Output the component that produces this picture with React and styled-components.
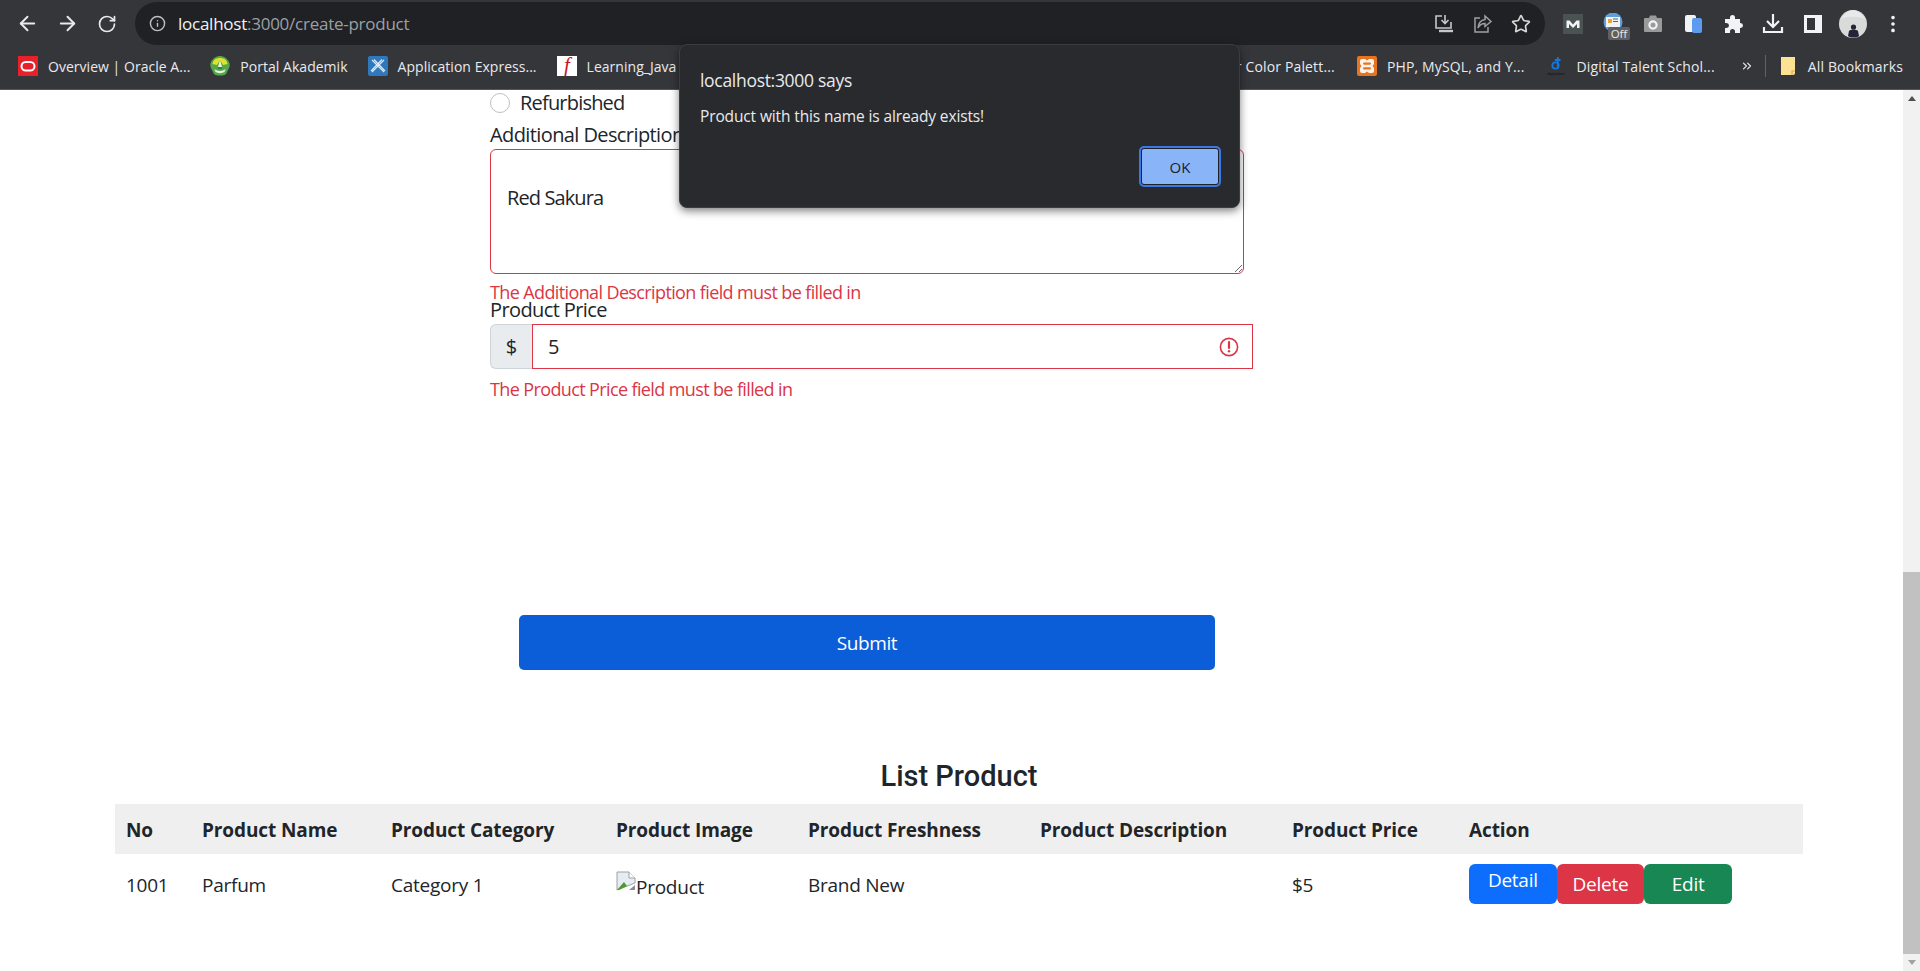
import React from 'react'
import styled, { createGlobalStyle } from 'styled-components'
import { ArrowLeft, ArrowRight, RotateCw, Info, Star, MoreVertical, ChevronsRight } from 'lucide-react'

const Global = createGlobalStyle`
    html, body { margin: 0; padding: 0; height: 100%; overflow: hidden; }
    body { font-family: "Open Sans", "Liberation Sans", sans-serif; color: #212529; background: #fff; }
    * { box-sizing: border-box; }
`

const columns = [76, 189, 225, 192, 232, 252, 177, 345]
const headers = ['No', 'Product Name', 'Product Category', 'Product Image', 'Product Freshness', 'Product Description', 'Product Price', 'Action']

function OracleIcon() {
    return (
        <svg width="20" height="20" viewBox="0 0 20 20">
            <rect width="20" height="20" fill="#e8202a" />
            <rect x="3.5" y="6" width="13" height="8.5" rx="4.2" fill="none" stroke="#fff" strokeWidth="2" />
        </svg>
    )
}

function PortalIcon() {
    return (
        <svg width="20" height="20" viewBox="0 0 20 20">
            <path d="M10 0 C13 0 17 2 19 6 C20 8 20 10 19 12 L16 18 C14 20 6 20 4 18 L1 12 C0 10 0 8 1 6 C3 2 7 0 10 0Z" fill="#55a84a" />
            <path d="M2.5 8 C3 4 6 2 10 2 C14 2 17 4 17.5 8 L13 9 L10 4 L7 9Z" fill="#dfe32a" />
            <path d="M10 3.5 L12 11 H8Z" fill="#eef2d8" />
            <path d="M4.5 13 C7 15.5 13 15.5 15.5 13 L14.5 16 C12 17.5 8 17.5 5.5 16Z" fill="#e9f3e4" />
            <path d="M8 11 H12 V13 H8Z" fill="#2f7f3f" />
        </svg>
    )
}

function ApexIcon() {
    return (
        <svg width="20" height="20" viewBox="0 0 20 20">
            <rect width="20" height="20" rx="2" fill="#2f78bd" />
            <path d="M4 4 L16 16 M16 4 L4 16 M6 3.5 L17 15 M14 3.5 L3 15" stroke="#dcebf7" strokeWidth="1.1" fill="none" />
        </svg>
    )
}

function FlashIcon() {
    return (
        <svg width="20" height="20" viewBox="0 0 20 20">
            <rect width="20" height="20" fill="#fff" />
            <text x="10" y="16" textAnchor="middle" fontFamily="Liberation Serif" fontStyle="italic" fontSize="21" fill="#c8161d">f</text>
        </svg>
    )
}

function XamppIcon() {
    return (
        <svg width="20" height="20" viewBox="0 0 20 20">
            <rect width="20" height="20" rx="2" fill="#e8741f" />
            <path d="M5 3 H8 L10 4.5 L12 3 H15 A2 2 0 0 1 17 5 V8 L15.5 10 L17 12 V15 A2 2 0 0 1 15 17 H12 L10 15.5 L8 17 H5 A2 2 0 0 1 3 15 V12 L4.5 10 L3 8 V5 A2 2 0 0 1 5 3Z" fill="#fdf3ea" />
            <rect x="6" y="6.5" width="8" height="2.2" rx="1.1" fill="#e8741f" />
            <rect x="6" y="11.3" width="8" height="2.2" rx="1.1" fill="#e8741f" />
        </svg>
    )
}

function DigitalIcon() {
    return (
        <svg width="20" height="20" viewBox="0 0 20 20">
            <circle cx="9.5" cy="9.5" r="3.2" fill="none" stroke="#1277e1" strokeWidth="1.8" />
            <path d="M11.8 1 V12.5 M8.8 4 H14.5" stroke="#1277e1" strokeWidth="1.8" fill="none" />
            <text x="10" y="18.5" textAnchor="middle" fontFamily="Liberation Sans" fontSize="4.4" fill="#111">digitalent</text>
        </svg>
    )
}

function FolderIcon() {
    return (
        <svg width="16" height="20" viewBox="0 0 16 20">
            <path d="M1 1 H15 V17 A2 2 0 0 1 13 19 H1Z" fill="#fde293" />
            <path d="M12 19 V15 H15" fill="none" stroke="#d8b04a" strokeWidth="1.2" />
        </svg>
    )
}

function InstallIcon() {
    return (
        <svg width="22" height="22" viewBox="0 0 22 22" fill="none" stroke="#c7c7c7" strokeWidth="1.6">
            <path d="M9 3 H3 V15 H18 V9" />
            <path d="M12 2 V10 M8.5 7 L12 10.5 L15.5 7" />
            <path d="M6 18 H20" strokeWidth="2.4" />
        </svg>
    )
}

function ShareIcon() {
    return (
        <svg width="22" height="22" viewBox="0 0 22 22" fill="none" stroke="#9aa0a6" strokeWidth="1.5">
            <path d="M8 5 H3 V19 H16 V14" />
            <path d="M13 3 L19 8.5 L13 13.5 V10.5 C9.5 10.5 7.5 12 6 15 C6.5 10 9 7 13 6.5Z" />
        </svg>
    )
}

function MediumIcon() {
    return (
        <svg width="20" height="20" viewBox="0 0 20 20">
            <rect width="20" height="20" fill="#4a5352" />
            <path d="M3.5 14 V6.5 H6.5 L10 10.5 L13.5 6.5 H16.5 V14 H14 V10 L10 14 L6 10 V14Z" fill="#f1f3f4" />
        </svg>
    )
}

function WeatherIcon() {
    return (
        <svg width="20" height="18" viewBox="0 0 20 18">
            <circle cx="10" cy="9" r="9.5" fill="#5f9ed9" />
            <rect x="3" y="4" width="14" height="10" fill="#f1f3f4" />
            <rect x="5" y="6" width="4" height="4" fill="#f0a33c" />
            <path d="M10 6 H15 M10 8.5 H15" stroke="#5f6368" strokeWidth="1" />
        </svg>
    )
}

function CameraIcon() {
    return (
        <svg width="20" height="18" viewBox="0 0 20 18">
            <path d="M2 3 H6 L7 0.5 H13 L14 3 H18 A1 1 0 0 1 19 4 V16 A1 1 0 0 1 18 17 H2 A1 1 0 0 1 1 16 V4 A1 1 0 0 1 2 3Z" fill="#9a9a9a" />
            <circle cx="10" cy="10" r="3.6" fill="none" stroke="#f1f3f4" strokeWidth="2.2" />
        </svg>
    )
}

function DocIcon() {
    return (
        <svg width="17" height="18" viewBox="0 0 17 18">
            <rect x="0" y="0" width="11" height="17" rx="2" fill="#f1f3f4" />
            <rect x="7" y="3" width="10" height="15" rx="2" fill="#5b9bf0" />
        </svg>
    )
}

function PuzzleIcon() {
    return (
        <svg width="20" height="20" viewBox="0 0 20 20">
            <path d="M2 5 H7 V3.5 A2.5 2.5 0 0 1 12 3.5 V5 H17 V9 H17.5 A2.5 2.5 0 0 1 17.5 14 H17 V19 H12 V17.5 A2.5 2.5 0 0 0 7 17.5 V19 H2 V14 H3.5 A2.5 2.5 0 0 0 3.5 9 H2Z" fill="#f1f3f4" />
        </svg>
    )
}

function DownloadIcon() {
    return (
        <svg width="22" height="20" viewBox="0 0 22 20" fill="none" stroke="#f1f3f4" strokeWidth="2.2">
            <path d="M11 0 V12 M5 7 L11 13 L17 7" />
            <path d="M2 13 V18 H20 V13" />
        </svg>
    )
}

function PanelIcon() {
    return (
        <svg width="18" height="18" viewBox="0 0 18 18">
            <path fillRule="evenodd" d="M0 0 H18 V18 H0Z M3 3 V15 H11 V3Z" fill="#f1f3f4" />
        </svg>
    )
}

function AvatarIcon() {
    return (
        <svg width="28" height="28" viewBox="0 0 28 28">
            <circle cx="14" cy="14" r="14" fill="#d9dbdb" />
            <path d="M2 9 C8 6 20 6 26 9 C22 3 18 0 14 0 C10 0 6 3 2 9Z" fill="#e8e9e9" />
            <circle cx="14.5" cy="17" r="2.6" fill="#2b2430" />
            <path d="M9 26 L10 21 C12 19 17 19 19 21 L20 26 C17 28 12 28 9 26Z" fill="#23233a" />
        </svg>
    )
}

function ErrorIcon() {
    return (
        <svg width="20" height="20" viewBox="0 0 20 20">
            <circle cx="10" cy="10" r="8.6" fill="none" stroke="#dc3545" strokeWidth="1.6" />
            <path d="M10 5 V11" stroke="#dc3545" strokeWidth="2.2" strokeLinecap="round" />
            <circle cx="10" cy="14.2" r="1.2" fill="#dc3545" />
        </svg>
    )
}

function BrokenImage() {
    return (
        <svg width="20" height="20" viewBox="0 0 20 20">
            <path d="M1 1 H13 L19 7 V12 L1 19Z" fill="#e6ecf5" stroke="#a0a0a0" />
            <path d="M13 1 V7 H19" fill="#fff" stroke="#a0a0a0" />
            <path d="M1 19 L8 11 L11 15 L3 19Z" fill="#4e9a2e" />
            <path d="M13 19 L19 14 V19Z" fill="#8d8d8d" />
        </svg>
    )
}

function App() {
    return (
        <>
            <Global />
            <Window>
                <Toolbar>
                    <NavSlot><ArrowLeft size={23} /></NavSlot>
                    <NavSlot><ArrowRight size={23} /></NavSlot>
                    <NavSlot><RotateCw size={20} /></NavSlot>
                    <AddressBar>
                        <Info size={17} color="#bdc1c6" />
                        <Url>localhost<UrlRest>:3000/create-product</UrlRest></Url>
                        <AddressActions>
                            <InstallIcon />
                            <ShareIcon />
                            <Star size={20} color="#d6d6d6" />
                        </AddressActions>
                    </AddressBar>
                    <Extensions>
                        <NavSlot><MediumIcon /></NavSlot>
                        <WeatherSlot>
                            <WeatherIcon />
                            <OffBadge>Off</OffBadge>
                        </WeatherSlot>
                        <NavSlot><CameraIcon /></NavSlot>
                        <NavSlot><DocIcon /></NavSlot>
                        <NavSlot><PuzzleIcon /></NavSlot>
                        <NavSlot><DownloadIcon /></NavSlot>
                        <NavSlot><PanelIcon /></NavSlot>
                        <NavSlot><AvatarIcon /></NavSlot>
                        <NavSlot><MoreVertical size={22} color="#f1f3f4" /></NavSlot>
                    </Extensions>
                </Toolbar>
                <BookmarkBar>
                    <Bookmark><OracleIcon /><BookmarkText>Overview | Oracle A...</BookmarkText></Bookmark>
                    <Bookmark><PortalIcon /><BookmarkText>Portal Akademik</BookmarkText></Bookmark>
                    <Bookmark><ApexIcon /><BookmarkText>Application Express...</BookmarkText></Bookmark>
                    <Bookmark><FlashIcon /><BookmarkText>Learning_Java</BookmarkText></Bookmark>
                    <BookmarksRight>
                        <BookmarkText>Super Color Palett...</BookmarkText>
                        <Bookmark><XamppIcon /><BookmarkText>PHP, MySQL, and Y...</BookmarkText></Bookmark>
                        <Bookmark><DigitalIcon /><BookmarkText>Digital Talent Schol...</BookmarkText></Bookmark>
                        <MoreBookmarks><ChevronsRight size={14} color="#e8eaed" /></MoreBookmarks>
                        <BarDivider />
                        <AllBookmarks><FolderIcon /><BookmarkText>All Bookmarks</BookmarkText></AllBookmarks>
                    </BookmarksRight>
                </BookmarkBar>
                <Viewport>
                    <Page>
                        <FormColumn>
                            <RadioRow>
                                <Radio />
                                <span>Refurbished</span>
                            </RadioRow>
                            <Label>Additional Description</Label>
                            <TextArea readOnly defaultValue="Red Sakura" />
                            <ErrorText>The Additional Description field must be filled in</ErrorText>
                            <PriceLabel>Product Price</PriceLabel>
                            <InputGroup>
                                <Addon>$</Addon>
                                <PriceBox>
                                    <PriceInput readOnly defaultValue="5" />
                                    <ErrorIcon />
                                </PriceBox>
                            </InputGroup>
                            <PriceError>The Product Price field must be filled in</PriceError>
                            <SubmitButton>Submit</SubmitButton>
                        </FormColumn>
                        <ListTitle>List Product</ListTitle>
                        <Table>
                            <colgroup>
                                {columns.map((w, i) => <col key={i} width={w} />)}
                            </colgroup>
                            <thead>
                                <tr>
                                    {headers.map(h => <Th key={h}>{h}</Th>)}
                                </tr>
                            </thead>
                            <tbody>
                                <tr>
                                    <Td>1001</Td>
                                    <Td>Parfum</Td>
                                    <Td>Category 1</Td>
                                    <Td><AltImage><BrokenImage /><AltText>Product</AltText></AltImage></Td>
                                    <Td>Brand New</Td>
                                    <Td></Td>
                                    <Td>$5</Td>
                                    <Td>
                                        <Actions>
                                            <ActionButton $bg="#0d6efd" $raised>Detail</ActionButton>
                                            <ActionButton $bg="#dc3545">Delete</ActionButton>
                                            <ActionButton $bg="#198754">Edit</ActionButton>
                                        </Actions>
                                    </Td>
                                </tr>
                            </tbody>
                        </Table>
                    </Page>
                    <Scrollbar>
                        <ScrollArrow $up />
                        <ScrollTrack><ScrollThumb /></ScrollTrack>
                        <ScrollArrow />
                    </Scrollbar>
                </Viewport>
                <AlertDialog>
                    <AlertTitle>localhost:3000 says</AlertTitle>
                    <AlertMessage>Product with this name is already exists!</AlertMessage>
                    <AlertFooter>
                        <OkButton>OK</OkButton>
                    </AlertFooter>
                </AlertDialog>
            </Window>
        </>
    )
}

export default App

const Window = styled.div`
    position: relative;
    width: 1920px;
    height: 971px;
    display: flex;
    flex-direction: column;
    overflow: hidden;
`

const Toolbar = styled.div`
    height: 47px;
    flex: none;
    display: flex;
    align-items: center;
    padding: 0 7px;
    background: #35363a;
    color: #e8eaed;
`

const NavSlot = styled.div`
    position: relative;
    width: 40px;
    height: 40px;
    flex: none;
    display: flex;
    align-items: center;
    justify-content: center;
`

const WeatherSlot = styled(NavSlot)`
    padding-bottom: 4px;
`

const AddressBar = styled.div`
    width: 1410px;
    height: 43px;
    margin-left: 8px;
    padding: 0 14px;
    flex: none;
    display: flex;
    align-items: center;
    border-radius: 22px;
    background: #202124;
`

const Url = styled.div`
    margin-left: 12px;
    font-size: 17px;
    letter-spacing: -0.25px;
    color: #f1f3f4;
`

const UrlRest = styled.span`
    color: #9aa0a6;
`

const AddressActions = styled.div`
    margin-left: auto;
    display: flex;
    align-items: center;
    gap: 17px;
`

const Extensions = styled.div`
    margin-left: 8px;
    display: flex;
`

const OffBadge = styled.span`
    position: absolute;
    left: 15px;
    top: 23px;
    width: 22px;
    height: 13px;
    border-radius: 2px;
    background: #5f6062;
    color: #e8eaed;
    font-size: 11.5px;
    line-height: 13px;
    text-align: center;
`

const BookmarkBar = styled.div`
    height: 43px;
    flex: none;
    display: flex;
    align-items: center;
    gap: 20px;
    padding: 0 18px 4px;
    background: #35363a;
    border-bottom: 1px solid #55565a;
`

const Bookmark = styled.div`
    display: flex;
    align-items: center;
    gap: 10px;
    flex: none;
`

const BookmarkText = styled.span`
    font-size: 14px;
    letter-spacing: 0.03px;
    color: #e8eaed;
    white-space: nowrap;
`

const BookmarksRight = styled.div`
    margin-left: auto;
    margin-right: -1px;
    display: flex;
    align-items: center;
    gap: 22px;

    ${BookmarkText} {
        letter-spacing: 0.15px;
    }
`

const MoreBookmarks = styled.div`
    display: flex;
    margin: 0 -11px 0 3px;
`

const BarDivider = styled.div`
    width: 1px;
    height: 22px;
    margin-right: -8px;
    background: #5f6368;
`

const AllBookmarks = styled(Bookmark)`
    gap: 12px;
`

const Viewport = styled.div`
    flex: 1;
    min-height: 0;
    display: flex;
    background: #fff;
`

const Page = styled.div`
    flex: 1;
    min-width: 0;
    padding: 0 100px 0 115px;
    overflow: hidden;
`

const FormColumn = styled.div`
    width: 763px;
    margin-left: 375px;
    font-size: 20px;
    line-height: 24px;
`

const RadioRow = styled.div`
    display: flex;
    align-items: center;
    gap: 10px;
    height: 29px;
    padding-bottom: 3px;
    letter-spacing: -0.8px;
`

const Radio = styled.span`
    width: 20px;
    height: 20px;
    border-radius: 50%;
    border: 1px solid #bfbfbf;
    background: #fff;
`

const Label = styled.div`
    height: 30px;
    padding-top: 4px;
    letter-spacing: -0.6px;
`

const PriceLabel = styled(Label)`
    padding-top: 0;
`

const TextArea = styled.textarea`
    display: block;
    width: 754px;
    height: 125px;
    padding: 36px 16px 0;
    border: 1px solid #dc3545;
    border-radius: 6px;
    outline: none;
    font-family: inherit;
    font-size: 20px;
    line-height: 24px;
    letter-spacing: -0.9px;
    color: #212529;
`

const ErrorText = styled.div`
    height: 24px;
    padding-top: 7px;
    line-height: 22px;
    font-size: 18px;
    letter-spacing: -0.62px;
    color: #dc3545;
`

const InputGroup = styled.div`
    display: flex;
    height: 45px;
    margin-top: -4px;
`

const Addon = styled.div`
    width: 42px;
    display: flex;
    align-items: center;
    justify-content: center;
    background: #e9ecef;
    border: 1px solid #ced4da;
    border-right: none;
    border-radius: 6px 0 0 6px;
`

const PriceBox = styled.div`
    flex: 1;
    display: flex;
    align-items: center;
    padding-right: 13px;
    border: 1px solid #dc3545;
`

const PriceInput = styled.input`
    flex: 1;
    min-width: 0;
    padding: 0 15px;
    border: none;
    outline: none;
    font-family: inherit;
    font-size: 20px;
    color: #212529;
`

const PriceError = styled(ErrorText)`
    height: 36px;
    padding-top: 9px;
`

const SubmitButton = styled.button`
    display: block;
    width: 696px;
    height: 55px;
    margin: 210px 0 0 29px;
    border: none;
    border-radius: 5px;
    background: #0b5ed7;
    color: #fff;
    font-family: inherit;
    font-size: 19px;
    letter-spacing: -0.4px;
`

const ListTitle = styled.h2`
    margin: 86px 0 0;
    height: 48px;
    font-family: Roboto, sans-serif;
    font-weight: 500;
    font-size: 29px;
    line-height: 40px;
    text-align: center;
    color: #212529;
`

const Table = styled.table`
    width: 1688px;
    table-layout: fixed;
    border-collapse: collapse;
    font-size: 19px;
`

const Th = styled.th`
    height: 50px;
    padding: 2px 11px 0;
    text-align: left;
    font-weight: 700;
    white-space: nowrap;
    letter-spacing: -0.1px;
    background: #efefef;
`

const Td = styled.td`
    height: 60px;
    padding: 2px 11px 0;
    white-space: nowrap;
    letter-spacing: -0.25px;
`

const AltImage = styled.span`
    display: inline-flex;
    align-items: flex-start;
`

const AltText = styled.span`
    margin-top: 3px;
`

const Actions = styled.div`
    display: flex;
    margin-top: -2px;
`

const ActionButton = styled.div`
    width: 87.67px;
    height: 40px;
    display: flex;
    align-items: ${p => (p.$raised ? 'flex-start' : 'center')};
    justify-content: center;
    padding-top: ${p => (p.$raised ? '3px' : '0')};
    border-radius: 6px;
    background: ${p => p.$bg};
    color: #fff;
`

const Scrollbar = styled.div`
    width: 17px;
    flex: none;
    display: flex;
    flex-direction: column;
    background: #f1f1f1;
`

const ScrollArrow = styled.div`
    height: 17px;
    flex: none;
    display: flex;
    align-items: center;
    justify-content: center;
    &::after {
        content: '';
        border-left: 4px solid transparent;
        border-right: 4px solid transparent;
        ${p => (p.$up ? 'border-bottom: 5px solid #505050;' : 'border-top: 5px solid #a3a3a3;')}
    }
`

const ScrollTrack = styled.div`
    flex: 1;
    display: flex;
    flex-direction: column;
    justify-content: flex-end;
`

const ScrollThumb = styled.div`
    height: 382px;
    background: #c1c1c1;
`

const AlertDialog = styled.div`
    position: absolute;
    left: 679px;
    top: 44px;
    width: 561px;
    height: 164px;
    padding: 24px 20px 0;
    border-radius: 8px;
    background: #292a2d;
    border: 1px solid #3c3d40;
    box-shadow: 0 3px 8px rgba(0, 0, 0, 0.5);
    color: #e8eaed;
`

const AlertTitle = styled.div`
    font-size: 17.5px;
    line-height: 22px;
    letter-spacing: -0.3px;
`

const AlertMessage = styled.div`
    margin-top: 15px;
    font-size: 15.5px;
    line-height: 20px;
    letter-spacing: -0.13px;
`

const AlertFooter = styled.div`
    display: flex;
    justify-content: flex-end;
    margin-top: 22px;
`

const OkButton = styled.button`
    width: 78px;
    height: 37px;
    border: 1px solid #202124;
    border-radius: 3px;
    outline: 2px solid #3b78e7;
    background: #8ab4f8;
    color: #202124;
    font-family: inherit;
    font-size: 15px;
`
